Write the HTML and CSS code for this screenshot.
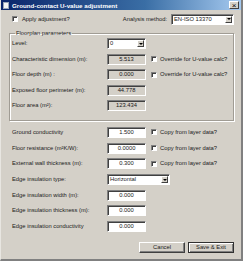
FILE: index.html
```html
<!DOCTYPE html>
<html lang="en">
<head>
  <meta charset="UTF-8">
  <title>Ground-contact U-value adjustment</title>
  <link rel="stylesheet" href="styles.css">
</head>
<body>
  <div class="window">
    <div class="titlebar">
      <span class="app-icon"></span>
      <span class="title">Ground-contact U-value adjustment</span>
      <span class="close">&#215;</span>
    </div>
    <div class="content">
      <div class="top-row">
        <span class="check"><span class="box"></span>Apply adjustment?</span>
        <span class="method">Analysis method:</span>
        <span class="combo wide">EN-ISO 13370<span class="arrow"></span></span>
      </div>

      <fieldset class="group">
        <legend>Floorplan parameters</legend>
        <div class="row">
          <span class="lbl">Level:</span>
          <span class="combo">0<span class="arrow"></span></span>
        </div>
        <div class="row">
          <span class="lbl">Characteristic dimension (m):</span>
          <span class="field ro">5.513</span>
          <span class="check opt"><span class="box"></span>Override for U-value calc?</span>
        </div>
        <div class="row">
          <span class="lbl">Floor depth (m) :</span>
          <span class="field ro">0.000</span>
          <span class="check opt"><span class="box"></span>Override for U-value calc?</span>
        </div>
        <div class="row">
          <span class="lbl">Exposed floor perimeter (m):</span>
          <span class="field ro">44.778</span>
        </div>
        <div class="row">
          <span class="lbl">Floor area (m&sup2;):</span>
          <span class="field ro">123.434</span>
        </div>
      </fieldset>

      <div class="rows">
        <div class="row">
          <span class="lbl">Ground conductivity</span>
          <span class="field">1.500</span>
          <span class="check opt"><span class="box"></span>Copy from layer data?</span>
        </div>
        <div class="row">
          <span class="lbl">Floor resistance (m&sup2;K/W):</span>
          <span class="field">0.0000</span>
          <span class="check opt"><span class="box"></span>Copy from layer data?</span>
        </div>
        <div class="row">
          <span class="lbl">External wall thickness (m):</span>
          <span class="field">0.300</span>
          <span class="check opt"><span class="box"></span>Copy from layer data?</span>
        </div>
        <div class="row">
          <span class="lbl">Edge insulation type:</span>
          <span class="combo wide">Horizontal<span class="arrow"></span></span>
        </div>
        <div class="row">
          <span class="lbl">Edge insulation width (m):</span>
          <span class="field">0.000</span>
        </div>
        <div class="row">
          <span class="lbl">Edge insulation thickness (m):</span>
          <span class="field">0.000</span>
        </div>
        <div class="row">
          <span class="lbl">Edge insulation conductivity</span>
          <span class="field">0.000</span>
        </div>
      </div>

      <div class="buttons">
        <button class="btn">Cancel</button>
        <button class="btn default">Save &amp; Exit</button>
      </div>
    </div>
  </div>
</body>
</html>
```

FILE: styles.css
```css
body {
  margin: 0;
  padding: 0;
  background: #d4d0c8;
  font-family: "Liberation Sans", Arial, sans-serif;
  font-size: 5.8px;
  line-height: 7px;
  color: #1a1a1a;
}
.window {
  width: 243px;
  height: 261px;
  box-sizing: border-box;
  background: #d4d0c8;
  border-left: 1px solid #e8e6e1;
  border-bottom: 2px solid #808080;
  border-right: 2px solid #808080;
}
.titlebar {
  height: 10px;
  display: flex;
  align-items: center;
  background: linear-gradient(90deg, #0a246a, #3a6ea5 60%, #a6caf0);
  color: #fff;
}
.app-icon {
  width: 6px;
  height: 7px;
  margin-left: 2px;
  background: #f4f4f4;
  border: 1px solid #9aa6b8;
  box-sizing: border-box;
}
.title {
  margin-left: 3px;
  font-weight: bold;
  font-size: 6.2px;
}
.close {
  margin-left: auto;
  margin-right: 2px;
  width: 10px;
  height: 8px;
  background: #d4d0c8;
  color: #000;
  font-size: 8px;
  line-height: 8px;
  text-align: center;
  box-sizing: border-box;
  border: 1px solid;
  border-color: #fff #404040 #404040 #fff;
}
.content {
  padding: 0 7px 0 8px;
}
.top-row {
  display: flex;
  align-items: center;
  height: 12px;
  margin-top: 3px;
  padding-left: 3px;
}
.check {
  display: flex;
  align-items: center;
  white-space: nowrap;
}
.box {
  width: 6px;
  height: 6px;
  margin-right: 4px;
  box-sizing: border-box;
  background: #fff;
  border: 1px solid;
  border-color: #808080 #fff #fff #808080;
  box-shadow: inset 1px 1px 0 #404040;
}
.opt {
  margin-left: 5px;
}
.opt .box {
  margin-right: 3px;
}
.method {
  margin-left: auto;
  margin-right: 4px;
}
.combo {
  display: flex;
  align-items: center;
  width: 39px;
  height: 11px;
  box-sizing: border-box;
  padding-left: 2px;
  background: #fff;
  border: 1px solid;
  border-color: #808080 #fff #fff #808080;
  box-shadow: inset 1px 1px 0 #404040;
}
.combo.wide {
  width: 63px;
}
.arrow {
  margin-left: auto;
  width: 7px;
  height: 7px;
  margin-right: 1px;
  box-sizing: border-box;
  background: #d4d0c8;
  border: 1px solid;
  border-color: #fff #404040 #404040 #fff;
  display: flex;
  align-items: center;
  justify-content: center;
}
.arrow::after {
  content: "";
  border-left: 2px solid transparent;
  border-right: 2px solid transparent;
  border-top: 2px solid #000;
}
.group {
  margin: 5px 0 0;
  padding: 1px 2px 4px;
  border: 1px solid #a09c94;
  box-shadow: inset 1px 1px 0 #fff, 1px 1px 0 #fff;
}
.group legend {
  padding: 0 1px;
  margin-left: 3px;
}
.rows {
  margin-top: 6px;
  padding-left: 3px;
}
.row {
  display: grid;
  grid-template-columns: 95px 39px auto;
  align-items: center;
  height: 11px;
  margin-bottom: 4.6px;
}
.rows .row {
  margin-bottom: 4.7px;
}
.row .combo.wide {
  grid-column: 2 / 4;
}
.field {
  height: 11px;
  box-sizing: border-box;
  line-height: 9px;
  text-align: center;
  background: #fff;
  border: 1px solid;
  border-color: #808080 #fff #fff #808080;
  box-shadow: inset 1px 1px 0 #404040;
}
.field.ro {
  background: #d4d0c8;
}
.buttons {
  display: flex;
  justify-content: flex-end;
  gap: 3px;
  margin-top: 10px;
}
.btn {
  width: 46px;
  height: 11px;
  padding: 0;
  font-family: inherit;
  font-size: 5.8px;
  line-height: 7px;
  color: #1a1a1a;
  background: #d4d0c8;
  border: 1px solid;
  border-color: #fff #404040 #404040 #fff;
  box-shadow: inset -1px -1px 0 #808080;
}
.btn.default {
  border-color: #303030;
  box-shadow: inset 1px 1px 0 #fff, inset -1px -1px 0 #808080;
}
```
